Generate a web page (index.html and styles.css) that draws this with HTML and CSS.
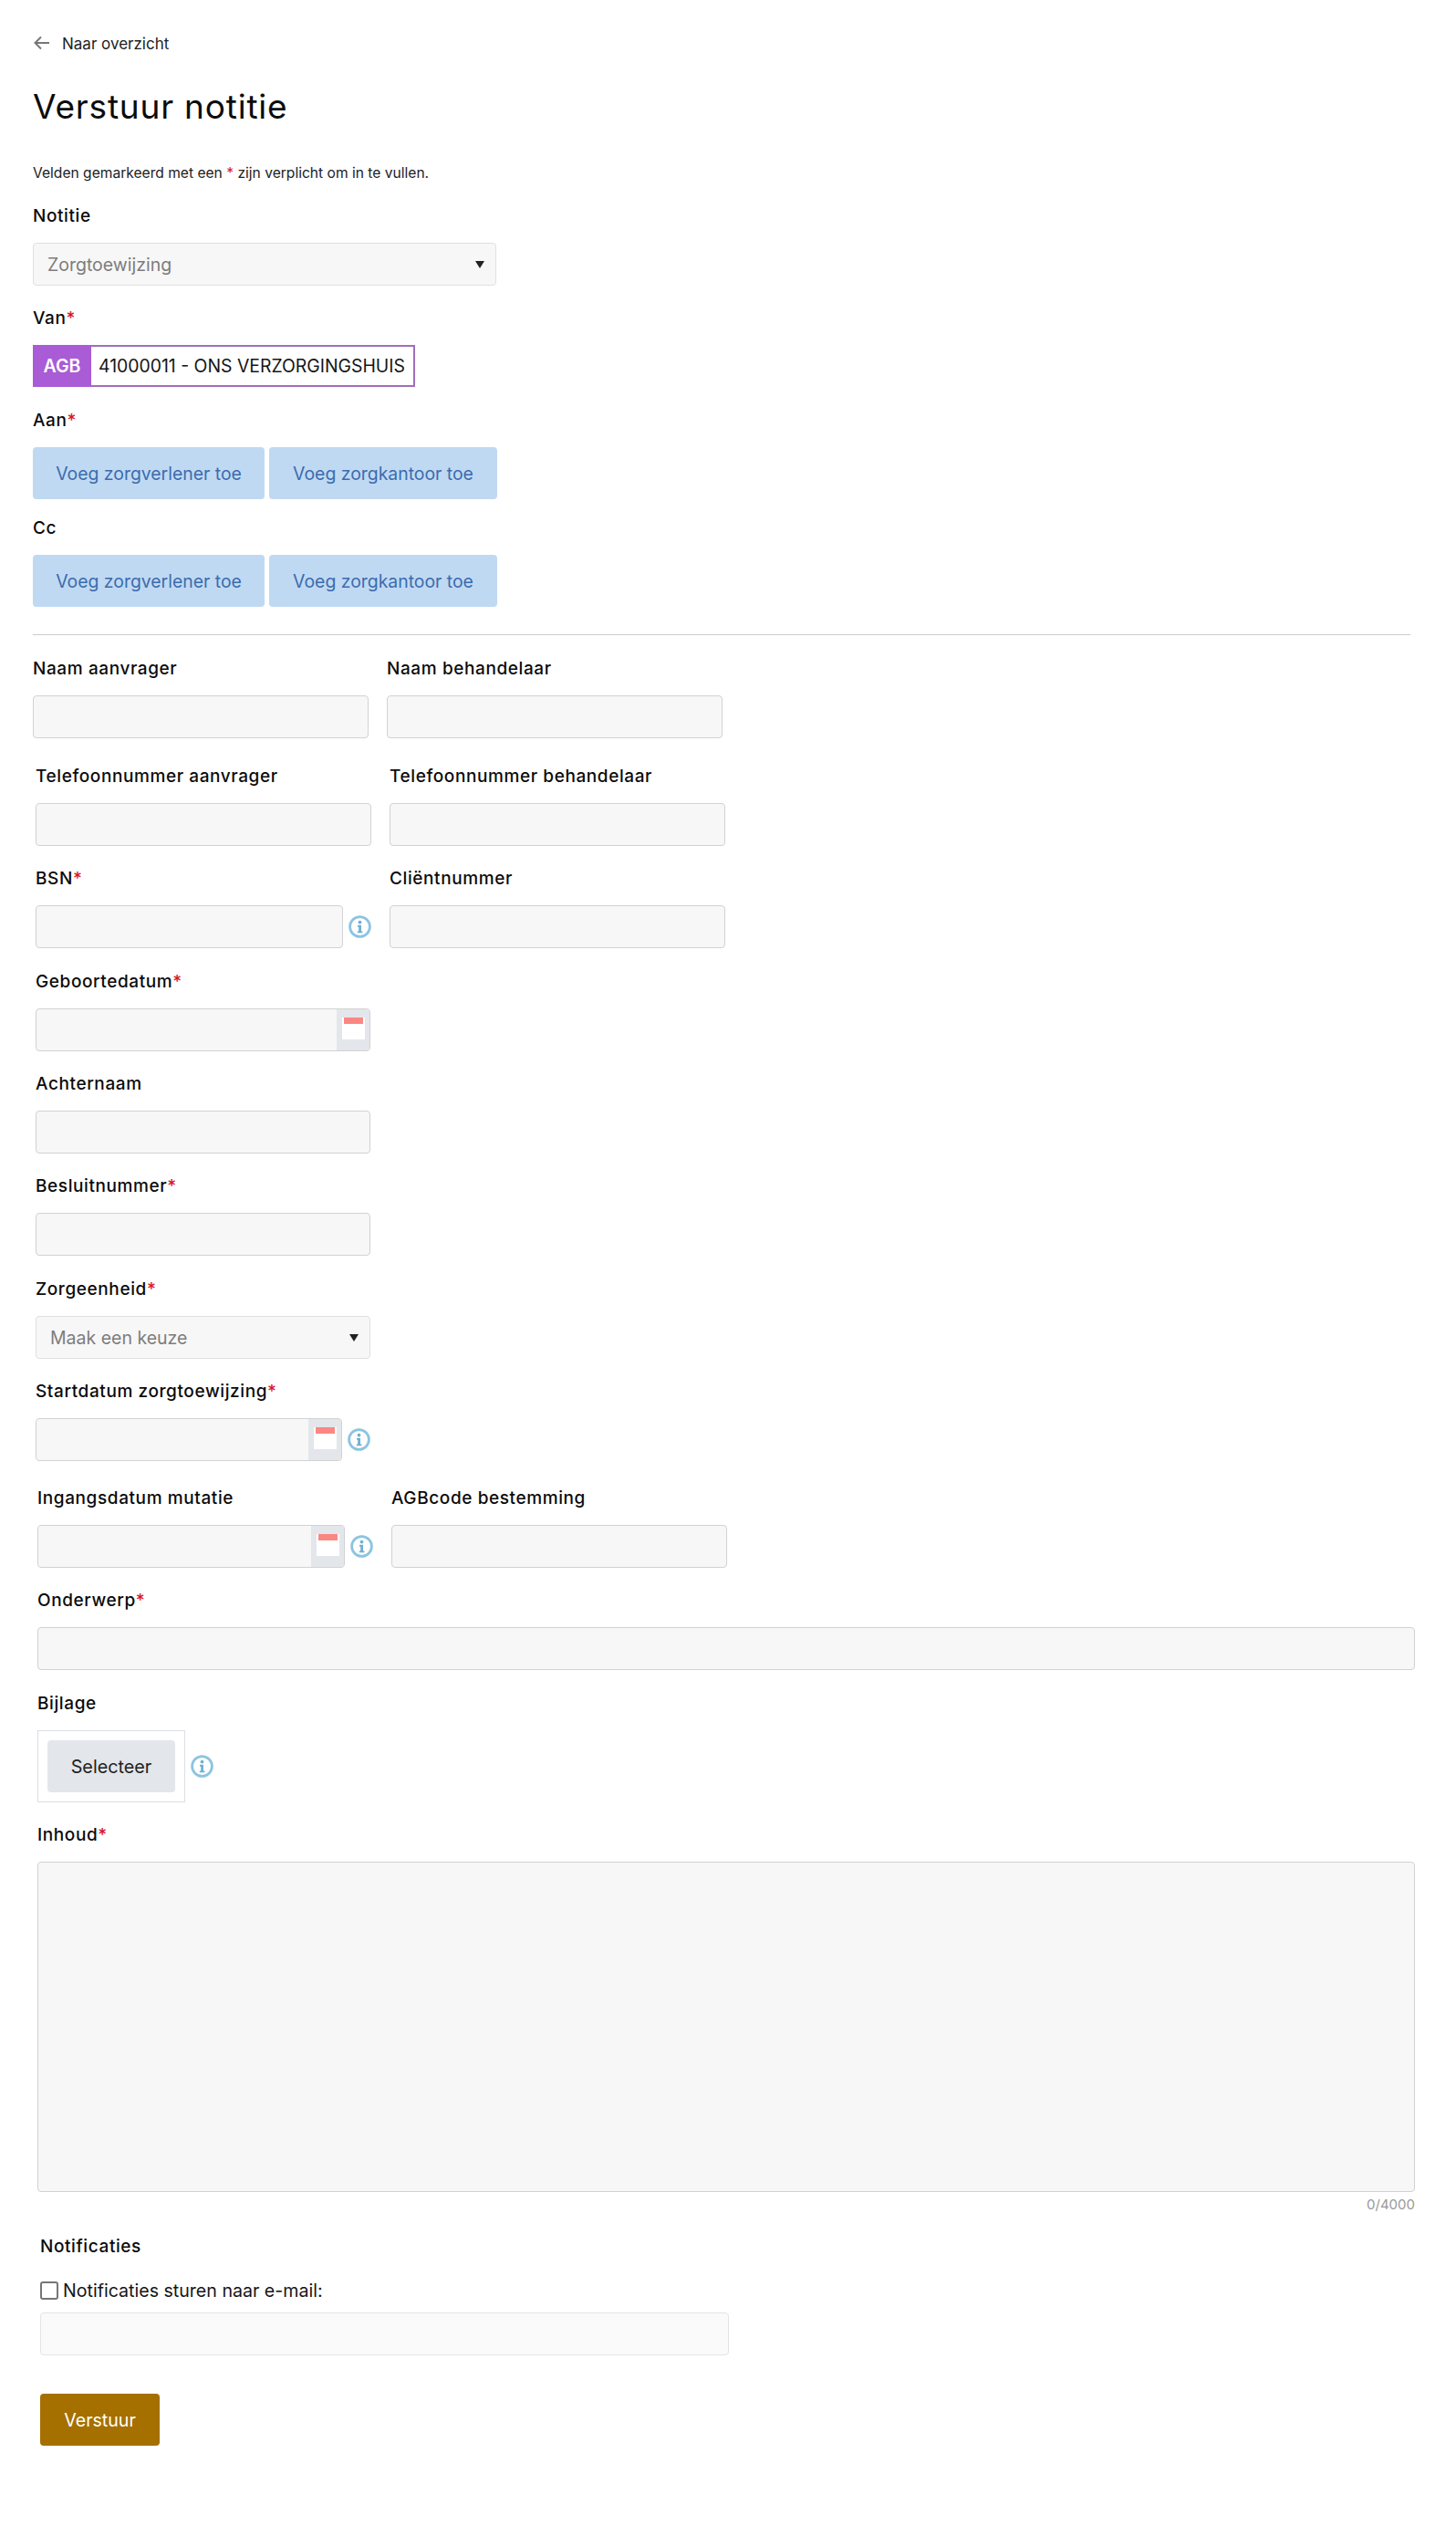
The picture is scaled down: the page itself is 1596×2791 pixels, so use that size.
FILE: index.html
```html
<!DOCTYPE html>
<html lang="nl">
<head>
<meta charset="utf-8">
<title>Verstuur notitie</title>
<link rel="stylesheet" href="styles.css">
</head>
<body>
<svg class="defs" width="0" height="0" aria-hidden="true">
  <symbol id="info" viewBox="0 0 25 25">
    <circle cx="12.5" cy="12.5" r="10.9" fill="none" stroke="#8cc4e0" stroke-width="2.8"/>
    <circle cx="12.5" cy="7.6" r="1.9" fill="#6fb0d2"/>
    <path d="M10 10.8h4v6.6h1.4v1.9H9.8v-1.9h1.4v-4.7H10z" fill="#6fb0d2"/>
  </symbol>
  <symbol id="cal" viewBox="0 0 25 25">
    <rect x="0" y="0" width="25" height="24" fill="#fff"/>
    <rect x="2" y="0" width="21" height="7" fill="#fb8783"/>
  </symbol>
</svg>
<main class="page">
  <a class="back" href="#">
    <svg class="back-icon" viewBox="0 0 17 16"><path d="M8 1.5 1.5 8 8 14.5M2 8h15" fill="none" stroke="#777" stroke-width="2"/></svg>
    <span>Naar overzicht</span>
  </a>
  <h1 class="title">Verstuur notitie</h1>
  <p class="hint">Velden gemarkeerd met een <span class="req">*</span> zijn verplicht om in te vullen.</p>

  <div class="group g-note">
    <label class="label">Notitie</label>
    <div class="select w-508"><span>Zorgtoewijzing</span></div>
  </div>
  <div class="group g-van">
    <label class="label">Van<span class="req">*</span></label>
    <div class="agb"><span class="agb-tag">AGB</span><span class="agb-val">41000011 - ONS VERZORGINGSHUIS</span></div>
  </div>
  <div class="group g-aan">
    <label class="label">Aan<span class="req">*</span></label>
    <div class="btn-row">
      <button class="btn-add b1" type="button">Voeg zorgverlener toe</button>
      <button class="btn-add b2" type="button">Voeg zorgkantoor toe</button>
    </div>
  </div>
  <div class="group g-cc">
    <label class="label">Cc</label>
    <div class="btn-row">
      <button class="btn-add b1" type="button">Voeg zorgverlener toe</button>
      <button class="btn-add b2" type="button">Voeg zorgkantoor toe</button>
    </div>
  </div>
  <hr class="rule">

  <div class="cols g-naam">
    <div><label class="label">Naam aanvrager</label><input class="input" type="text"></div>
    <div><label class="label">Naam behandelaar</label><input class="input" type="text"></div>
  </div>
  <div class="cols in-3 g-tel">
    <div><label class="label">Telefoonnummer aanvrager</label><input class="input" type="text"></div>
    <div><label class="label">Telefoonnummer behandelaar</label><input class="input" type="text"></div>
  </div>
  <div class="cols in-3 g-bsn">
    <div>
      <label class="label">BSN<span class="req">*</span></label>
      <div class="with-info"><input class="input" type="text"><svg class="info"><use href="#info"/></svg></div>
    </div>
    <div><label class="label">Cliëntnummer</label><input class="input" type="text"></div>
  </div>
  <div class="group in-3 w-367 g-geb">
    <label class="label">Geboortedatum<span class="req">*</span></label>
    <div class="date"><span class="date-field"></span><span class="addon"><svg class="cal"><use href="#cal"/></svg></span></div>
  </div>
  <div class="group in-3 w-367 g-ach">
    <label class="label">Achternaam</label>
    <input class="input" type="text">
  </div>
  <div class="group in-3 w-367 g-bes">
    <label class="label">Besluitnummer<span class="req">*</span></label>
    <input class="input" type="text">
  </div>
  <div class="group in-3 w-367 g-zorg">
    <label class="label">Zorgeenheid<span class="req">*</span></label>
    <div class="select"><span>Maak een keuze</span></div>
  </div>
  <div class="group in-3 w-367 g-start">
    <label class="label">Startdatum zorgtoewijzing<span class="req">*</span></label>
    <div class="with-info">
      <div class="date"><span class="date-field"></span><span class="addon"><svg class="cal"><use href="#cal"/></svg></span></div>
      <svg class="info"><use href="#info"/></svg>
    </div>
  </div>
  <div class="cols in-5 g-ing">
    <div>
      <label class="label">Ingangsdatum mutatie</label>
      <div class="with-info">
        <div class="date"><span class="date-field"></span><span class="addon"><svg class="cal"><use href="#cal"/></svg></span></div>
        <svg class="info"><use href="#info"/></svg>
      </div>
    </div>
    <div><label class="label">AGBcode bestemming</label><input class="input" type="text"></div>
  </div>
  <div class="group in-5 g-ond">
    <label class="label">Onderwerp<span class="req">*</span></label>
    <input class="input wide" type="text">
  </div>
  <div class="group in-5 g-bij">
    <label class="label">Bijlage</label>
    <div class="upload">
      <div class="upload-box"><button class="btn-select" type="button">Selecteer</button></div>
      <svg class="info"><use href="#info"/></svg>
    </div>
  </div>
  <div class="group in-5 g-inh">
    <label class="label">Inhoud<span class="req">*</span></label>
    <textarea class="area"></textarea>
    <div class="count">0/4000</div>
  </div>
  <div class="notif">
    <label class="label">Notificaties</label>
    <label class="check"><input class="box" type="checkbox"><span>Notificaties sturen naar e-mail:</span></label>
    <input class="input mail" type="text">
    <button class="submit" type="button">Verstuur</button>
  </div>
</main>
</body>
</html>
```
FILE: styles.css
```css
* { box-sizing: border-box; }
html, body { margin: 0; padding: 0; background: #fff; }
body { font-family: "Inter", "Noto Sans", sans-serif; color: #111; min-height: 2791px; }
.defs { position: absolute; }
.page { padding: 36px 50px 113px 36px; }

.back { display: flex; align-items: center; gap: 14px; height: 24px; color: #222; text-decoration: none; font-size: 17px; }
.back-icon { width: 17px; height: 16px; margin-left: 1px; margin-top: -2px; }
.title { margin: 35px 0 0; font: 400 37px/44px "Inter", sans-serif; letter-spacing: .8px; color: #0c0c0c; }
.hint { margin: 41px 0 0; font-size: 15.6px; line-height: 20px; color: #222; }
.req { color: #d9152a; }

.label { display: block; height: 24px; margin-bottom: 18px; font-size: 19px; line-height: 26px; font-weight: 500; letter-spacing: .6px; color: #0b0b0b; white-space: nowrap; }
.group { margin-bottom: 23px; }
.g-note { margin-top: 24px; }
.g-van { margin-bottom: 24px; }
.g-aan { margin-bottom: 19px; }
.g-cc { margin-bottom: 30px; }

.select { position: relative; height: 47px; padding: 0 15px; display: flex; align-items: center; background: #f7f7f7; border: 1px solid #e0e0e0; border-radius: 4px; color: #7d7d7d; font-size: 19.5px; }
.select::after { content: ""; position: absolute; right: 12px; top: 19px; border: 5px solid transparent; border-top: 8px solid #222; border-bottom: 0; }
.w-508 { width: 508px; }

.agb { display: flex; width: 419px; height: 46px; border: 2px solid #a06fbb; }
.agb-tag { width: 64px; margin: -2px 0 -2px -2px; display: flex; align-items: center; justify-content: center; background: #a95cd6; color: #fff; font-size: 19.5px; font-weight: 600; }
.agb-val { padding-left: 8px; display: flex; align-items: center; font-size: 19.4px; white-space: nowrap; color: #161616; }

.btn-row { display: flex; gap: 5px; }
.btn-add { height: 57px; border: 0; border-radius: 4px; background: #c0d9f3; color: #3b6cae; font: 400 19.4px "Inter", sans-serif; padding: 0; }
.b1 { width: 254px; }
.b2 { width: 250px; }

.rule { margin: 0 0 24px; border: 0; border-top: 1px solid #ccc; }

.cols { display: grid; grid-template-columns: 368px 368px; column-gap: 20px; margin-bottom: 23px; }
.g-naam { margin-bottom: 29px; }
.g-tel { margin-bottom: 23px; }
.g-bsn { margin-bottom: 24px; }
.in-3 { margin-left: 3px; }
.in-5 { margin-left: 5px; }
.w-367 { width: 367px; }

.input { display: block; width: 100%; height: 47px; padding: 0 15px; background: #f7f7f7; border: 1px solid #d2d2d2; border-radius: 4px; font: 400 18px "Inter", sans-serif; }
.with-info { display: flex; align-items: center; gap: 6px; }
.with-info .input, .with-info .date { flex: 1 1 0; min-width: 0; }
.info { width: 25px; height: 25px; flex: none; }

.date { display: flex; height: 47px; background: #f7f7f7; border: 1px solid #d2d2d2; border-radius: 4px; overflow: hidden; }
.date-field { flex: 1; }
.addon { width: 36px; background: #e3e6ea; padding: 9px 0 0 6px; }
.cal { display: block; width: 25px; height: 25px; }
.g-geb { margin-bottom: 23px; }
.g-ach { margin-bottom: 23px; }
.g-bes { margin-bottom: 24px; }
.g-zorg { margin-bottom: 23px; }
.g-start { margin-bottom: 28px; }
.g-ing { margin-bottom: 23px; }
.g-ond { margin-bottom: 24px; }
.g-bij { margin-bottom: 23px; }

.upload { display: flex; align-items: center; gap: 6px; }
.upload-box { width: 162px; height: 79px; padding: 10px; background: #fff; border: 1px solid #dcdfe4; }
.btn-select { width: 140px; height: 57px; border: 0; border-radius: 4px; background: #e3e6ea; color: #222; font: 400 19.8px "Inter", sans-serif; }

.area { display: block; width: 1510px; height: 362px; background: #f7f7f7; border: 1px solid #d2d2d2; border-radius: 4px; resize: none; }
.wide { width: 1510px; }
.count { width: 1510px; margin-top: 6px; height: 16px; text-align: right; font-size: 15px; line-height: 16px; color: #999; }
.g-inh { margin-bottom: 0; }

.notif { margin: 25px 0 0 8px; }
.notif .label { margin-bottom: 25px; }
.check { display: flex; align-items: center; gap: 5px; height: 24px; font-size: 19.6px; color: #161616; }
.box { appearance: none; width: 20px; height: 20px; margin: 0; background: #fff; border: 2px solid #767676; border-radius: 3px; }
.mail { width: 755px; margin-top: 12px; background: #fafafa; border-color: #e4e4e4; }
.submit { display: block; width: 131px; height: 57px; margin-top: 42px; border: 0; border-radius: 4px; background: #a57000; color: #fff; font: 400 19.6px "Inter", sans-serif; }
```
